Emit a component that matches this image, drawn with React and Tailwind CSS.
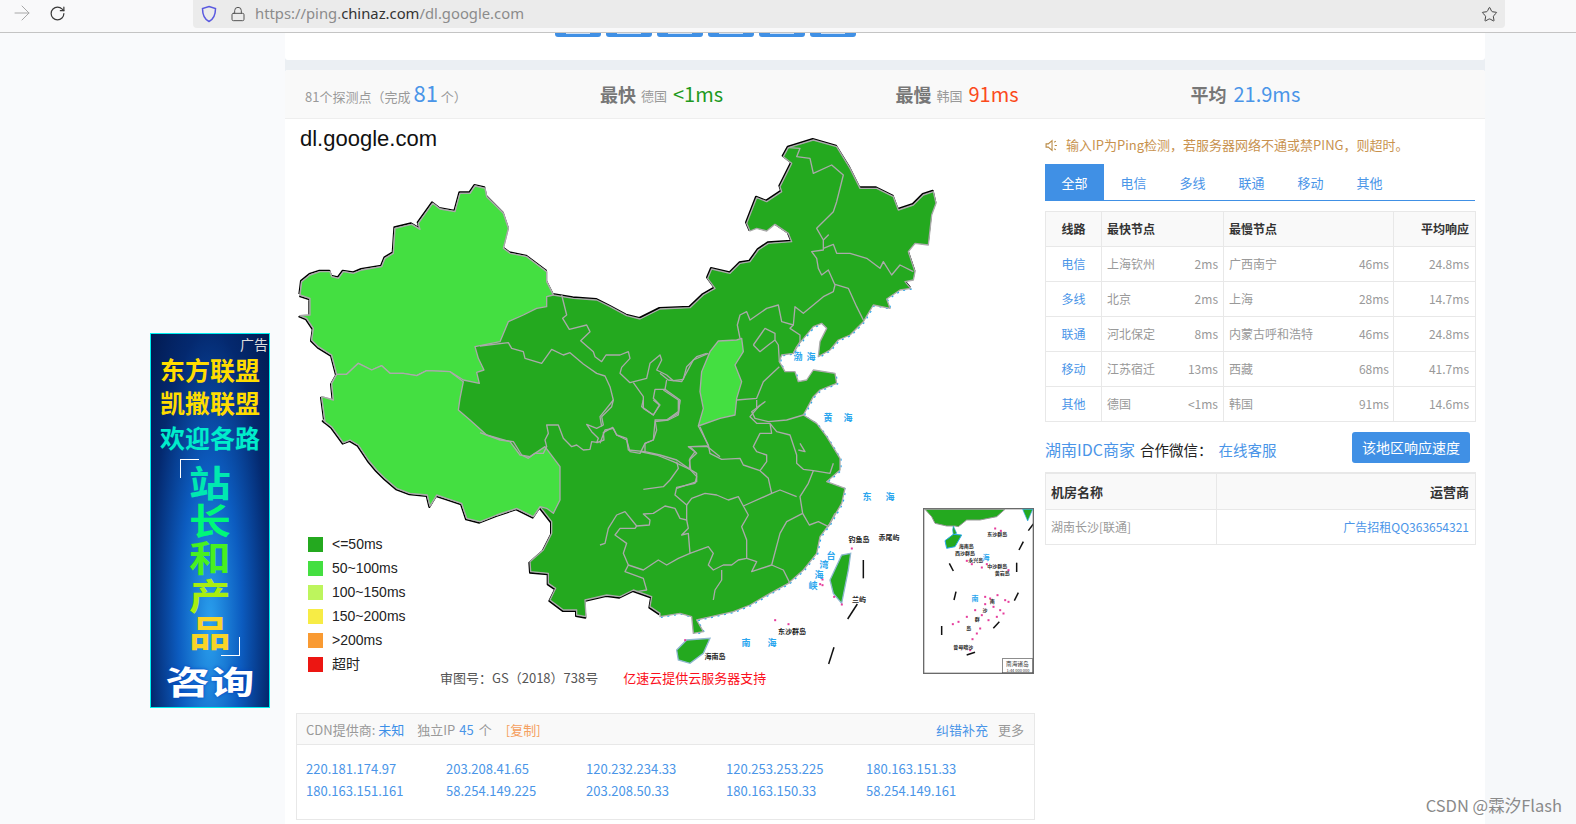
import React from 'react'
import { ArrowRight, RotateCw, Lock, Star } from 'lucide-react'

// outline pieces, each written in the frame of 3x crops, shift() moves them into one frame
const shift = (s, dx = 0, dy = 0) =>
  s.split(' ').map(p => {
    const [x, y] = p.split(',').map(Number)
    return `${x + dx},${y + dy}`
  }).join(' ')

const WEST = '30,510 35,470 60,450 90,440 120,440 125,455 145,460 160,440 190,445 215,435 275,425 285,400 310,385 315,310 365,298 390,313 385,295 428,235 450,252 495,260 510,205 540,205 555,183 585,190 590,215 640,265 655,310 640,370 660,385 710,395 770,440 770,470 790,510 850,520 920,525 960,545 1010,572 1050,582 1110,552'
const NORTH = shift('0,552 90,548 130,510 165,490 143,460 155,432 210,445 240,415 270,410 295,375 325,355 395,350 385,325 345,298 320,318 290,310 270,318 260,295 290,218 320,230 365,200 360,185 395,115 370,95 385,68 460,45 530,65 570,130 600,190 650,190 700,215 715,255 760,240 790,210 820,200 828,235 815,270 805,360 765,355 745,380 765,440 760,465 735,470 752,490', 1110)
const COAST = shift('752,490 720,495 680,522 690,550 640,540 610,590 570,630 535,645 510,675 475,695 480,650 500,610 485,595 460,605 410,665 400,685 365,690 358,710 375,740 405,740 415,770 440,765 460,735 525,745 530,775 480,795 460,815 430,870 470,895', 1110)
  + ' ' + shift('500,50 540,115 540,150 500,185 555,205 545,250 510,310 480,350 470,400 430,450 385,490 330,520 270,555 220,575 130,595 110,600 130,635 100,640 95,590 60,580 0,590', 1110, 885)
const SOUTH = shift('1110,580 1080,560 1085,530 1030,510 990,530 950,525 885,540 888,590 860,585 860,570 820,570 780,540 797,505 775,490 775,460 722,455 720,425 760,390 785,340 785,305 750,260 730,290 680,265 620,285 570,305 530,295 515,250 470,235 440,225 420,258 412,225 360,220 320,205 285,175 260,150 235,120 205,75 180,60 160,68 125,20 100,0', 0, 885)
  + ' 105,890 95,815 130,825 125,775 140,748 125,690 85,665 65,645 70,610 50,580 30,572 60,570 60,520 30,510'
const CHINA = `${WEST} ${NORTH} ${COAST} ${SOUTH}`

const XINJIANG = '30,510 35,470 60,450 90,440 120,440 125,455 145,460 160,440 190,445 215,435 275,425 285,400 310,385 315,310 365,298 390,313 385,295 428,235 450,252 495,260 510,205 540,205 555,183 585,190 590,215 640,265 655,310 640,370 660,385 710,395 770,440 770,470 790,510 770,515 770,545 740,550 700,570 655,590 630,650 555,665 565,700 582,735 560,742 568,775 520,765 480,740 410,737 380,752 340,745 300,745 275,722 245,735 205,715 170,748 140,748 125,690 85,665 65,645 70,610 50,580 30,572 60,570 60,520'
const TIBET = '140,748 170,748 205,715 245,735 275,722 300,745 340,745 380,752 410,737 480,740 520,770 510,820 505,855 540,885 590,930 660,950 690,990 720,995 765,965 810,1025 810,1125 790,1165 770,1150 750,1145 730,1175 680,1150 620,1170 570,1190 530,1180 515,1135 470,1120 440,1110 420,1143 412,1110 360,1105 320,1090 285,1060 260,1035 235,1005 205,960 180,945 160,953 125,905 105,890 95,815 130,825 125,775'
const SHANXI = '175,648 230,645 245,640 250,680 225,720 245,770 230,820 225,870 180,880 115,903 130,850 120,800 125,740 150,680'

const BORDERS_NW = [
  '245,15 260,75 248,85 268,118 320,105 330,125 302,152 340,185 345,200 365,215 378,195 420,195 445,185 450,205 425,232 420,250 450,278 500,265 510,220 540,195 545,210 530,240 560,255 580,272 610,268 620,230 650,200 680,190',
  '0,168 85,158 95,175 130,185 135,205 185,220 215,178 250,195 270,188 310,222 350,250 375,258 390,290 400,330 395,350 365,380 370,405 350,415 320,403 335,425 355,445 350,458 372,450 370,428 398,412 410,435 440,450 450,485 480,490 495,460 520,450 525,395 565,390 595,375 600,330 555,298 525,298 520,325 540,345 520,375 490,355 490,320 460,278',
  '555,298 560,270',
  '480,485 530,495 580,515 630,538 650,550 650,575 590,595',
  '630,470 680,468 720,500',
  '630,470 650,490 628,510 632,538',
  '660,410 685,468',
  '0,428 60,450 100,455 125,495 145,505 165,490 190,490 200,470 195,450 205,430 200,405 235,405 250,445 275,470 290,465 310,480 330,478 335,455 355,458',
  '590,515 595,535 570,570 550,590 490,598',
]
const BORDERS_S = [
  '130,0 125,20 160,45 178,15 160,0',
  '240,0 235,40 200,60 165,60 170,90 160,120 135,130 135,155 180,165 230,180 270,208 290,230 285,250 230,262 225,285 260,315 260,360 240,355 225,325 195,318 160,340 130,342 150,360 148,375 110,378 75,335 50,345 25,385 15,430 0,435',
  '40,0 0,50 5,80',
  '0,130 15,90 40,85 50,105 80,115 85,150 135,155',
  '295,78 325,135 330,160 365,178 420,175 430,195 480,212 505,235 515,280',
  '325,140 265,140 285,155 270,175 268,208',
  '480,212 500,185 500,165 470,155 460,140 480,100 515,100 510,70 530,95 570,105 590,165 590,190 610,208 640,212 690,220 700,190',
  '640,212 625,250 600,290 608,340 628,375 655,365 685,380 705,340',
  '260,315 275,295 315,280 350,285 385,300 415,290 430,318 515,280 540,270 590,290',
  '430,318 445,345 425,380 440,420 440,475 415,480 395,495 370,495 340,510 325,495 340,460 325,440 270,460 265,400 245,405 265,385 260,360',
  '440,475 470,485 455,515 515,495 540,400 560,365 608,340',
  '515,495 550,510 570,550',
  '365,510 365,540 345,570 340,600',
  '270,460 235,475 200,495 175,480 130,510 85,495 75,515 130,535 140,570 110,575',
  '85,495 70,460 80,430 45,405 60,385 105,385 110,378',
  '510,70 470,70 450,50 480,15',
  '595,150 615,155 600,130',
]
const BORDERS_NE = [
  '385,68 420,70 410,95 450,100 460,145 515,120 550,150 530,230 520,260 470,310 490,345 505,330 490,345 490,375 455,380 470,400 475,430 485,450 505,435 525,480 520,500 490,515 430,565 405,545 400,600 390,610 420,630 420,650 400,685',
  '490,370 520,358 530,385 570,385 620,400 660,430 670,410 695,450 720,420 760,440',
  '525,478 565,490 590,545 610,585',
  '400,600 365,590 355,540 320,550 270,585 260,560 240,570 232,600 240,640',
  '280,660 315,610 345,625 345,645 325,660 300,680 280,660',
  '345,645 355,660 358,710',
  '358,725 310,770 290,820 230,825',
  '145,685 100,705 65,770 25,765 0,745',
  '10,795 55,825 55,860 20,885',
  '290,825 290,850 315,830 275,860 285,880 325,890 380,885 430,870',
]

const SEA = [
  ['渤', 798, 360], ['海', 811, 360], ['黄', 828, 421], ['海', 848, 421],
  ['东', 867, 500], ['海', 890, 500], ['南', 746, 646], ['海', 772, 646],
  ['台', 831, 559], ['湾', 824, 568], ['海', 819, 578], ['峡', 813, 589],
]
const ISLES = [
  ['钓鱼岛', 859, 542], ['赤尾屿', 889, 540], ['兰屿', 859, 602],
  ['东沙群岛', 792, 634], ['海南岛', 715, 659],
]
const DASHES = [
  '610,420 610,475', '592,552 563,597', '522,682 506,732',
  '868,430 880,453', '888,515 882,540', '845,618 845,645', '920,705 945,697',
  '1000,625 1018,605', '1063,542 1075,518', '1070,428 1070,456', '1077,390 1090,365', '1105,332 1120,312',
]
const PINK = [
  [575, 385], [487, 478], [480, 492], [487, 495], [345, 600], [385, 612], [522, 530], [545, 553], [75, 660],
  [1005, 325], [1022, 332], [920, 422], [935, 432], [965, 442], [980, 432], [1045, 450],
  [975, 530], [1012, 525], [990, 535], [1035, 540], [1045, 545], [975, 552], [1000, 560], [1020, 570], [1030, 580],
  [945, 570], [965, 585], [985, 600], [1010, 590], [920, 590], [895, 605], [878, 612], [960, 625], [950, 640], [937, 657], [930, 690],
]
const INSET_LABELS = [
  ['东沙群岛', 1012, 348], ['海南岛', 919, 384], ['西沙群岛', 915, 406], ['永兴岛', 947, 426],
  ['中沙群岛', 1012, 445], ['黄岩岛', 1027, 465], ['南', 997, 550], ['沙', 975, 577],
  ['群', 952, 602], ['岛', 926, 629], ['曾母暗沙', 910, 687],
]

const LEGEND = [
  ['bg-[#24a91f]', '<=50ms'],
  ['bg-[#44df41]', '50~100ms'],
  ['bg-[#bdf55d]', '100~150ms'],
  ['bg-[#f7ec45]', '150~200ms'],
  ['bg-[#f99a32]', '>200ms'],
  ['bg-[#ec1612]', '超时'],
]

const ROWS = [
  ['电信', '上海钦州', '2ms', '广西南宁', '46ms', '24.8ms'],
  ['多线', '北京', '2ms', '上海', '28ms', '14.7ms'],
  ['联通', '河北保定', '8ms', '内蒙古呼和浩特', '46ms', '24.8ms'],
  ['移动', '江苏宿迁', '13ms', '西藏', '68ms', '41.7ms'],
  ['其他', '德国', '<1ms', '韩国', '91ms', '14.6ms'],
]

const IPS = [
  '220.181.174.97', '203.208.41.65', '120.232.234.33', '120.253.253.225', '180.163.151.33',
  '180.163.151.161', '58.254.149.225', '203.208.50.33', '180.163.150.33', '58.254.149.161',
]

function BrowserBar() {
  return (
    <div className="h-[33px] flex bg-[#f9f9fa] border-b border-[#c4c4c4] relative z-10">
      <div className="w-[193px] h-[26px] flex items-center">
        <ArrowRight size={24} strokeWidth={1} className="ml-[10px] text-[#a8a8a8]" />
        <RotateCw size={17} strokeWidth={1.7} className="ml-[15px] text-[#3a3a3a]" />
      </div>
      <div className="w-[1312px] h-[28px] bg-[#ebebeb] rounded-b-[4px] flex items-center">
        <svg width="16" height="18" viewBox="0 0 16 18" fill="none" className="ml-[8px]">
          <path d="M8 1.5 L14.5 3.5 C14.5 10 13 14 8 16.5 C3 14 1.5 10 1.5 3.5 Z" stroke="#5a5ae0" strokeWidth="1.5" />
        </svg>
        <Lock size={16} strokeWidth={1.5} className="ml-[13px] text-[#555]" />
        <span className="ml-[9px] -mt-[2px] text-[14.8px] text-[#8b8b8b] font-['Noto_Sans',sans-serif] whitespace-nowrap">
          https://ping.<span className="text-[#333]">chinaz.com</span>/dl.google.com
        </span>
        <Star size={17} strokeWidth={1.4} className="ml-auto mr-[7px] text-[#444]" />
      </div>
    </div>
  )
}

function AdBanner() {
  return (
    <div className="relative w-[120px] h-[375px] mt-[300px] ml-[150px] border border-[#00f0f0] bg-[radial-gradient(ellipse_at_50%_78%,#2aa0ee_0%,#0c5cc0_38%,#04296f_72%,#021a50_100%)] overflow-hidden flex flex-col items-center font-bold">
      <span className="absolute top-0 right-[1px] text-[14px] leading-[20px] font-normal text-[#dddddd]">广告</span>
      <div className="mt-[19px] text-[25px] leading-[33px] text-[#ffdc00] whitespace-nowrap">东方联盟</div>
      <div className="text-[25px] leading-[33px] text-[#ffdc00] whitespace-nowrap">凯撒联盟</div>
      <div className="mt-[1px] text-[25px] leading-[34px] text-[#00eccb] whitespace-nowrap">欢迎各路</div>
      <div className="mt-[9px] flex flex-col items-center text-[36px] leading-[37.6px] scale-x-[1.16]">
        <span className="text-[#00e8b0]">站</span>
        <span className="text-[#00f878]">长</span>
        <span className="text-[#48f020]">和</span>
        <span className="text-[#a8ee10]">产</span>
        <span className="text-[#f8d428]">品</span>
      </div>
      <div className="mt-[6px] text-[32px] leading-[46px] text-white whitespace-nowrap scale-x-[1.39] [text-shadow:0_0_3px_#0040c0]">咨询</div>
      <span className="absolute left-[29px] top-[125px] w-[19px] h-[19px] border-l border-t border-white" />
      <span className="absolute left-[70px] top-[303px] w-[19px] h-[19px] border-r border-b border-white" />
    </div>
  )
}

function MapDrawing() {
  const third = 1 / 3
  return (
    <svg width="760" height="594" viewBox="285 119 760 594" className="block">
      <g transform={`translate(290 125) scale(${third})`} fill="none" strokeLinejoin="round">
        <polyline points={`${WEST} ${NORTH}`} stroke="#000" strokeWidth="6" transform="translate(-2 -3)" />
        <polyline points={SOUTH} stroke="#000" strokeWidth="6" transform="translate(-2 3)" />
        <polyline points={COAST} stroke="#2aa8ee" strokeWidth="4" strokeDasharray="6 14" transform="translate(3 2)" />
        <polygon points={CHINA} fill="#24a91f" stroke="#aaaaaa" strokeWidth="4" />
        <polygon points={XINJIANG} fill="#44df41" stroke="#aaaaaa" strokeWidth="4" />
        <polygon points={TIBET} fill="#44df41" stroke="#aaaaaa" strokeWidth="4" />
      </g>
      <g transform={`translate(660 125) scale(${third})`} fill="none" stroke="#aaaaaa" strokeWidth="4" strokeLinejoin="round">
        <polygon points={SHANXI} fill="#44df41" />
        {BORDERS_NE.map((b, i) => <polyline key={i} points={b} />)}
      </g>
      <g transform={`translate(480 290) scale(${third})`} fill="none" stroke="#aaaaaa" strokeWidth="4" strokeLinejoin="round">
        {BORDERS_NW.map((b, i) => <polyline key={i} points={b} />)}
      </g>
      <g transform={`translate(600 400) scale(${third})`} fill="none" stroke="#aaaaaa" strokeWidth="4" strokeLinejoin="round">
        {BORDERS_S.map((b, i) => <polyline key={i} points={b} />)}
      </g>
      <g transform={`translate(660 420) scale(${third})`}>
        {/* hainan, taiwan */}
        <polygon points="50,690 80,660 150,655 130,700 90,730 55,720" fill="#24a91f" stroke="#8fb8d0" strokeWidth="4" />
        <polygon points="510,480 545,405 572,400 565,450 545,550 520,520" fill="#24a91f" stroke="#8fb8d0" strokeWidth="4" />
        {DASHES.map((d, i) => <polyline key={i} points={d} fill="none" stroke="#111" strokeWidth="4.5" />)}
        {/* south sea inset */}
        <rect x="791" y="266" width="329" height="494" fill="none" stroke="#6a6a6a" strokeWidth="4" />
        <polygon points="795,268 1035,268 1010,290 960,300 920,300 895,320 885,318 860,318 825,310 815,290" fill="#24a91f" stroke="#999" strokeWidth="3" />
        <polygon points="880,318 890,340 880,345 878,330" fill="#24a91f" stroke="#2aa8ee" strokeWidth="2" />
        <polygon points="855,362 880,343 905,345 885,380 860,385" fill="#24a91f" stroke="#2aa8ee" strokeWidth="3" />
        <polygon points="1088,268 1118,268 1103,303" fill="#24a91f" stroke="#2aa8ee" strokeWidth="2" />
        <rect x="1027" y="716" width="91" height="42" fill="#fff" stroke="#555" strokeWidth="2" />
        {PINK.map(([x, y], i) => <rect key={i} x={x - 2.5} y={y - 2.5} width="6" height="6" fill="#e63c9c" />)}
        {INSET_LABELS.map(([t, x, y], i) => (
          <text key={i} x={x} y={y} textAnchor="middle" fontSize="15" fontWeight="700" fill="#222">{t}</text>
        ))}
        <text x="1072" y="738" textAnchor="middle" fontSize="17" fill="#333">南海诸岛</text>
        <text x="1074" y="755" textAnchor="middle" fontSize="12" fill="#333">1:44 000 000</text>
        <text x="945" y="544" textAnchor="middle" fontSize="21" fontWeight="700" fill="#2ba6ee">南</text>
        <text x="978" y="419" textAnchor="middle" fontSize="21" fontWeight="700" fill="#2ba6ee">海</text>
      </g>
      {SEA.map(([t, x, y], i) => (
        <text key={i} x={x} y={y} textAnchor="middle" fontSize="9" fontWeight="700" fill="#2ba6ee">{t}</text>
      ))}
      {ISLES.map(([t, x, y], i) => (
        <text key={i} x={x} y={y} textAnchor="middle" fontSize="7" fontWeight="700" fill="#222">{t}</text>
      ))}
    </svg>
  )
}

function MapPanel() {
  return (
    <div className="relative h-[594px]">
      <MapDrawing />
      <div className="absolute left-[15px] top-[6px] text-[22px] leading-[28px] text-[#111] font-['Liberation_Sans',sans-serif]">dl.google.com</div>
      <div className="absolute left-[23px] top-[413px] flex flex-col font-['Liberation_Sans','Noto_Sans_CJK_SC',sans-serif]">
        {LEGEND.map(([c, label]) => (
          <div key={label} className="h-[24px] flex items-center gap-[9px] text-[14px] text-[#222]">
            <span className={`w-[15px] h-[15px] ${c}`} />
            {label}
          </div>
        ))}
      </div>
      <div className="absolute left-[155px] top-[549px] flex text-[13px] leading-[20px] whitespace-nowrap">
        <span className="text-[#555]">审图号：GS（2018）738号</span>
        <span className="ml-[25px] text-[#fb1020]">亿速云提供云服务器支持</span>
      </div>
    </div>
  )
}

function CdnPanel() {
  return (
    <div className="ml-[11px] w-[739px] h-[107px] border border-[#e8e8e8] text-[13px]">
      <div className="h-[31px] flex items-center pl-[9px] pr-[10px] pt-[2px] bg-[#f9f9f9] border-b border-[#e8e8e8] text-[#999] whitespace-nowrap">
        <span>CDN提供商:</span>
        <span className="ml-[3px] text-[#3b8fe8]">未知</span>
        <span className="ml-[13px]">独立IP</span>
        <span className="ml-[4px] text-[#4a95e8]">45</span>
        <span className="ml-[5px]">个</span>
        <span className="ml-[14px] text-[#f5a060]">[复制]</span>
        <span className="ml-auto text-[#4a95e8]">纠错补充</span>
        <span className="ml-[10px]">更多</span>
      </div>
      <div className="grid grid-cols-[140px_140px_140px_140px_140px] pl-[9px] pt-[13px] text-[#4a95e8] leading-[22px]">
        {IPS.map(ip => <span key={ip}>{ip}</span>)}
      </div>
    </div>
  )
}

function SpeakerIcon() {
  return (
    <svg width="13" height="13" viewBox="0 0 12 12" fill="none" stroke="#b98a45" strokeWidth="1">
      <path d="M1 4.5 H3 L6.5 1.5 V10.5 L3 7.5 H1 Z" />
      <path d="M8.5 3 L10 2 M9 6 H11 M8.5 9 L10 10" />
    </svg>
  )
}

function RightPanel() {
  return (
    <div className="w-[430px] pt-[16px]">
      <div className="h-[20px] flex items-center text-[13px] text-[#c8924e] whitespace-nowrap">
        <SpeakerIcon />
        <span className="ml-[8px]">输入IP为Ping检测，若服务器网络不通或禁PING，则超时。</span>
      </div>
      <div className="mt-[9px] flex h-[37px] border-b border-[#4090e5] text-[13px] text-[#4a95e8]">
        {['全部', '电信', '多线', '联通', '移动', '其他'].map((t, i) => (
          <span key={t} className={i === 0 ? 'w-[59px] pt-[1px] flex items-center justify-center bg-[#4090e5] text-white' : 'w-[59px] pt-[1px] flex items-center justify-center'}>{t}</span>
        ))}
      </div>
      <table className="mt-[10px] w-[430px] table-fixed border-collapse text-[12px] text-[#999]">
        <colgroup>
          <col className="w-[56px]" />
          <col className="w-[122px]" />
          <col className="w-[170px]" />
          <col className="w-[82px]" />
        </colgroup>
        <thead>
          <tr className="h-[35px] bg-[#f9f9f9] text-[#333] font-bold">
            <td className="border border-[#e8e8e8] text-center">线路</td>
            <td className="border border-[#e8e8e8] px-[5px]">最快节点</td>
            <td className="border border-[#e8e8e8] px-[5px]">最慢节点</td>
            <td className="border border-[#e8e8e8] pr-[6px] text-right">平均响应</td>
          </tr>
        </thead>
        <tbody>
          {ROWS.map(r => (
            <tr key={r[0]} className="h-[35px]">
              <td className="border border-[#e8e8e8] text-center text-[#4a95e8]">{r[0]}</td>
              <td className="border border-[#e8e8e8] px-[5px]">
                <div className="flex justify-between"><span>{r[1]}</span><span>{r[2]}</span></div>
              </td>
              <td className="border border-[#e8e8e8] pl-[5px] pr-[4px]">
                <div className="flex justify-between"><span>{r[3]}</span><span>{r[4]}</span></div>
              </td>
              <td className="border border-[#e8e8e8] pr-[6px] text-right">{r[5]}</td>
            </tr>
          ))}
        </tbody>
      </table>
      <div className="mt-[10px] h-[31px] flex items-center whitespace-nowrap">
        <div className="flex items-baseline pt-[3px]">
          <span className="text-[16px] text-[#4a95e8]">湖南IDC商家</span>
          <span className="ml-[5px] text-[14.5px] text-[#222]">合作微信：</span>
          <span className="ml-[6px] text-[14.5px] text-[#4a95e8]">在线客服</span>
        </div>
        <button className="ml-auto mr-[5px] w-[118px] h-[31px] rounded-[3px] bg-[#4090e5] text-[14px] text-white">该地区响应速度</button>
      </div>
      <table className="mt-[9px] w-[430px] table-fixed border-collapse text-[#999]">
        <colgroup>
          <col className="w-[171px]" />
          <col className="w-[259px]" />
        </colgroup>
        <thead>
          <tr className="h-[36px] bg-[#f9f9f9] border-t-2 border-t-[#e8e8e8] text-[13px] text-[#333] font-bold">
            <td className="border border-[#e8e8e8] px-[5px]">机房名称</td>
            <td className="border border-[#e8e8e8] pr-[6px] text-right">运营商</td>
          </tr>
        </thead>
        <tbody>
          <tr className="h-[35px] text-[12px]">
            <td className="border border-[#e8e8e8] px-[5px]">湖南长沙[联通]</td>
            <td className="border border-[#e8e8e8] pr-[6px] text-right text-[#4a95e8]">广告招租QQ363654321</td>
          </tr>
        </tbody>
      </table>
    </div>
  )
}

function StatsBar() {
  return (
    <div className="h-[49px] flex items-center pl-[20px] bg-[#f9f9f9] border-b border-[#eeeeee] rounded-t-[3px] whitespace-nowrap">
      <div className="w-[295px] flex items-baseline text-[13px] text-[#999]">
        81个探测点（完成<span className="mx-[3px] text-[22px] leading-none text-[#4a95e8]">81</span>个）
      </div>
      <div className="w-[295.5px] flex items-center">
        <span className="text-[18px] font-bold text-[#777]">最快</span>
        <span className="ml-[5px] mt-[3px] text-[13px] text-[#999]">德国</span>
        <span className="ml-[6px] text-[20px] leading-none text-[#1f9a1f]">&lt;1ms</span>
      </div>
      <div className="w-[295px] flex items-center">
        <span className="text-[18px] font-bold text-[#777]">最慢</span>
        <span className="ml-[5px] mt-[3px] text-[13px] text-[#999]">韩国</span>
        <span className="ml-[6px] text-[20px] leading-none text-[#fb4a1c]">91ms</span>
      </div>
      <div className="flex items-center">
        <span className="text-[18px] font-bold text-[#777]">平均</span>
        <span className="ml-[7px] text-[20px] leading-none text-[#4a95e8]">21.9ms</span>
      </div>
    </div>
  )
}

export default function App() {
  return (
    <div className="relative w-[1576px] h-[824px] overflow-hidden bg-[#f9fafc] font-['Noto_Sans_CJK_SC',sans-serif]">
      <BrowserBar />
      <div className="flex h-[791px]">
        <div className="w-[285px]">
          <AdBanner />
        </div>
        <div className="w-[1200px] bg-[#ebeff3]">
          <div className="h-[27px] bg-white rounded-b-[3px] overflow-hidden flex pl-[270px] gap-[5px]">
            {[0, 1, 2, 3, 4, 5].map(i => (
              <span key={i} className="w-[46px] h-[4px] bg-[#4090e5] rounded-b-[3px] flex justify-center">
                <span className="w-[24px] h-[1px] bg-[#cfe2f8]" />
              </span>
            ))}
          </div>
          <div className="mt-[10px] h-[754px] bg-white rounded-t-[3px]">
            <StatsBar />
            <div className="flex">
              <div className="w-[760px]">
                <MapPanel />
                <CdnPanel />
              </div>
              <RightPanel />
            </div>
          </div>
        </div>
        <div className="flex-1 bg-[#f6f8fa]" />
      </div>
      <div className="absolute right-[14px] bottom-[9px] text-[16.5px] leading-[20px] text-[#8a8a8a]">CSDN @霖汐Flash</div>
    </div>
  )
}
